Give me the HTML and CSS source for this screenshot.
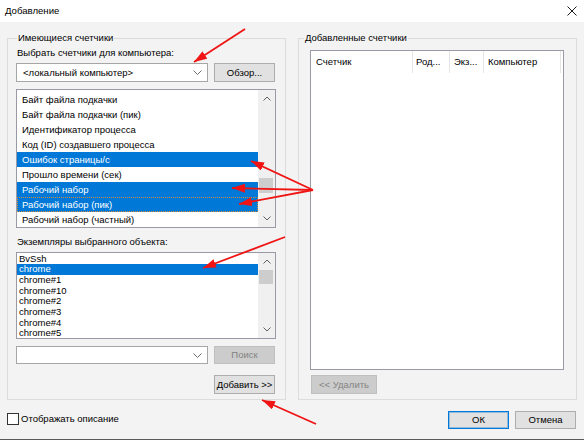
FILE: index.html
```html
<!DOCTYPE html>
<html lang="ru">
<head>
<meta charset="utf-8">
<title>Добавление</title>
<link rel="stylesheet" href="styles.css">
</head>
<body>
<div class="window">
  <div class="titlebar">
    <span class="title">Добавление</span>
    <svg class="close" width="10" height="10" viewBox="0 0 10 10"><path d="M0.5 0.5 L9.5 9.5 M9.5 0.5 L0.5 9.5" stroke="#1a1a1a" stroke-width="1" fill="none"/></svg>
  </div>
  <div class="main">
    <fieldset class="group group-left">
      <legend class="legend-left">Имеющиеся счетчики</legend>
      <div class="label label1">Выбрать счетчики для компьютера:</div>
      <div class="row row1">
        <div class="combo"><span>&lt;локальный компьютер&gt;</span><svg width="9" height="5" viewBox="0 0 9 5"><path d="M0.5 0.5 L4.5 4.5 L8.5 0.5" stroke="#6d6d6d" fill="none"/></svg></div>
        <div class="btn">Обзор...</div>
      </div>
      <div class="listbox counters">
        <div class="items">
          <div class="item">Байт файла подкачки</div>
          <div class="item">Байт файла подкачки (пик)</div>
          <div class="item">Идентификатор процесса</div>
          <div class="item">Код (ID) создавшего процесса</div>
          <div class="item sel">Ошибок страницы/с</div>
          <div class="item">Прошло времени (сек)</div>
          <div class="item sel">Рабочий набор</div>
          <div class="item sel focus">Рабочий набор (пик)</div>
          <div class="item">Рабочий набор (частный)</div>
        </div>
        <div class="scrollbar">
          <div class="sb-btn"><svg width="8" height="5" viewBox="0 0 8 5"><path d="M0.5 4.5 L4 1 L7.5 4.5" stroke="#606060" fill="none"/></svg></div>
          <div class="sb-track"><div class="thumb thumb1"></div></div>
          <div class="sb-btn"><svg width="8" height="5" viewBox="0 0 8 5"><path d="M0.5 0.5 L4 4 L7.5 0.5" stroke="#606060" fill="none"/></svg></div>
        </div>
      </div>
      <div class="label label2">Экземпляры выбранного объекта:</div>
      <div class="listbox instances">
        <div class="items">
          <div class="item">BvSsh</div>
          <div class="item sel">chrome</div>
          <div class="item">chrome#1</div>
          <div class="item">chrome#10</div>
          <div class="item">chrome#2</div>
          <div class="item">chrome#3</div>
          <div class="item">chrome#4</div>
          <div class="item">chrome#5</div>
        </div>
        <div class="scrollbar">
          <div class="sb-btn"><svg width="8" height="5" viewBox="0 0 8 5"><path d="M0.5 4.5 L4 1 L7.5 4.5" stroke="#606060" fill="none"/></svg></div>
          <div class="sb-track"><div class="thumb thumb2"></div></div>
          <div class="sb-btn"><svg width="8" height="5" viewBox="0 0 8 5"><path d="M0.5 0.5 L4 4 L7.5 0.5" stroke="#606060" fill="none"/></svg></div>
        </div>
      </div>
      <div class="row row-search">
        <div class="combo combo-empty"><span></span><svg width="9" height="5" viewBox="0 0 9 5"><path d="M0.5 0.5 L4.5 4.5 L8.5 0.5" stroke="#6d6d6d" fill="none"/></svg></div>
        <div class="btn disabled">Поиск</div>
      </div>
      <div class="row row-add">
        <div class="btn btn-add">Добавить &gt;&gt;</div>
      </div>
    </fieldset>
    <fieldset class="group group-right">
      <legend class="legend-right">Добавленные счетчики</legend>
      <div class="table">
        <div class="thead">
          <div class="th c1">Счетчик</div>
          <div class="th c2">Род...</div>
          <div class="th c3">Экз...</div>
          <div class="th c4">Компьютер</div>
        </div>
      </div>
      <div class="btn disabled btn-remove">&lt;&lt; Удалить</div>
    </fieldset>
  </div>
  <div class="footer">
    <div class="check"><span class="box"></span><span>Отображать описание</span></div>
    <div class="actions">
      <div class="btn btn-ok">ОК</div>
      <div class="btn">Отмена</div>
    </div>
  </div>
  <svg class="arrows" width="584" height="440" viewBox="0 0 584 440">
    <defs>
      <marker id="ah" markerUnits="userSpaceOnUse" markerWidth="14" markerHeight="10" refX="13" refY="4.5" orient="auto">
        <path d="M0 0 L13 4.5 L0 9 Z" fill="#f01414"/>
      </marker>
    </defs>
    <g stroke="#f01414" stroke-width="1.8" fill="none" marker-end="url(#ah)">
      <line x1="245" y1="29" x2="194" y2="62"/>
      <line x1="313" y1="190" x2="251" y2="161"/>
      <line x1="313" y1="190" x2="232" y2="188"/>
      <line x1="313" y1="190" x2="239" y2="204"/>
      <line x1="285" y1="237" x2="203" y2="268"/>
      <line x1="316" y1="424" x2="262" y2="400"/>
    </g>
  </svg>
</div>
</body>
</html>
```

FILE: styles.css
```css
* { box-sizing: border-box; }
html, body { margin: 0; padding: 0; }
body {
  width: 584px;
  height: 440px;
  overflow: hidden;
  background: #f3f3f3;
  font-family: "Liberation Sans", Arial, sans-serif;
  font-size: 9.5px;
  color: #000;
}
.window {
  position: relative;
  width: 584px;
  height: 440px;
  background: #f3f3f3;
  border-bottom: 1px solid #5a5a5a;
}
.titlebar {
  height: 22px;
  background: #fff;
  display: flex;
  align-items: center;
  justify-content: space-between;
  padding: 0 7px 0 5px;
}
.title { line-height: 14px; font-size: 9.6px; }
.main {
  display: flex;
  gap: 12px;
  padding: 9px 0 0 7px;
}
fieldset.group {
  margin: 0;
  width: 279px;
  min-width: 0;
  border: 1px solid #dcdcdc;
  padding: 0 9px 5px 8px;
}
fieldset.group-right { padding: 0 12px 5px 11px; }
legend {
  padding: 0 1px;
  line-height: 14px;
  font-size: 9.5px;
}
.legend-left { margin-left: 1px; }
.legend-right { margin-left: -6px; }
.label {
  height: 14px;
  line-height: 14px;
  padding-left: 1px;
  white-space: nowrap;
}
.label1 { margin-top: 1px; }
.label2 { margin-top: 7px; }
.row { display: flex; }
.row1 { margin-top: 3px; }
.row-search { margin-top: 7px; }
.row-add { margin-top: 11px; padding-left: 192px; }
.combo {
  width: 192px;
  height: 19px;
  border: 1px solid #a6a6a6;
  background: #fff;
  display: flex;
  align-items: center;
  justify-content: space-between;
  padding: 0 5px 0 6px;
  white-space: nowrap;
}
.combo-empty { height: 18px; }
.btn {
  width: 61px;
  height: 19px;
  margin-left: 6px;
  border: 1px solid #adadad;
  background: #e1e1e1;
  text-align: center;
  line-height: 17px;
  white-space: nowrap;
}
.row-search .btn { height: 18px; line-height: 16px; }
.btn.disabled {
  background: #cccccc;
  border-color: #bfbfbf;
  color: #838383;
}
.btn-add { padding: 0; }
.listbox {
  border: 1px solid #9a9aa6;
  background: #fff;
  display: flex;
  overflow: hidden;
}
.counters { margin-top: 7px; height: 139px; }
.instances { margin-top: 3px; height: 87px; }
.items { flex: 1; overflow: hidden; min-width: 0; }
.counters .items { padding-top: 2px; }
.instances .items { padding-top: 0.5px; }
.item { white-space: nowrap; }
.counters .item { height: 15px; line-height: 15px; padding-left: 5px; }
.instances .item { height: 10.7px; line-height: 10.7px; padding-left: 2px; }
.item.sel { background: #0078d7; color: #fff; }
.item.focus { outline: 1px dotted #d08a3c; outline-offset: -1px; }
.scrollbar {
  width: 17px;
  flex: none;
  background: #f0f0f0;
  display: flex;
  flex-direction: column;
}
.sb-btn {
  height: 17px;
  flex: none;
  display: flex;
  align-items: center;
  justify-content: center;
}
.sb-track { flex: 1; }
.thumb { width: 14px; margin-left: 1px; background: #cdcdcd; }
.thumb1 { margin-top: 71px; height: 15px; }
.thumb2 { margin-top: 0; height: 14px; }
.table {
  margin-top: 5px;
  height: 320px;
  border: 1px solid #9a9aa6;
  background: #fff;
}
.thead { display: flex; height: 22px; }
.th {
  height: 22px;
  line-height: 22px;
  border-right: 1px solid #e5e5e5;
  white-space: nowrap;
  overflow: hidden;
  padding-left: 4px;
}
.c1 { width: 102px; padding-left: 5px; }
.c2 { width: 37px; padding-left: 3px; }
.c3 { width: 34px; }
.c4 { width: 77px; }
.btn-remove { margin: 5px 0 0 1px; width: 66px; }
.footer {
  display: flex;
  justify-content: space-between;
  padding: 7px 8px 0 7px;
}
.check {
  display: flex;
  align-items: center;
  gap: 2px;
  margin-top: 1px;
  line-height: 12px;
}
.box {
  width: 12px;
  height: 12px;
  border: 1px solid #333;
  background: #fff;
}
.actions { display: flex; gap: 6px; margin-top: 4px; }
.actions .btn { margin-left: 0; height: 18px; line-height: 16px; }
.btn-ok {
  border-color: #0078d7;
  box-shadow: inset 0 0 0 1px rgba(0, 120, 215, 0.35);
}
.arrows {
  position: absolute;
  left: 0;
  top: 0;
  pointer-events: none;
}
```
